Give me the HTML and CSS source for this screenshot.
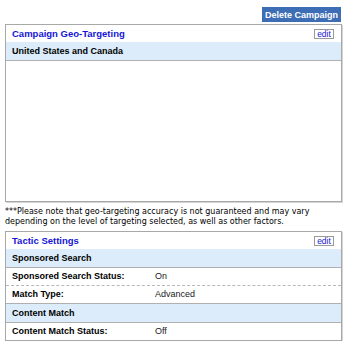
FILE: index.html
```html
<!DOCTYPE html>
<html lang="en">
<head>
    <meta charset="UTF-8">
    <title>Campaign Settings</title>
    <link rel="stylesheet" href="styles.css">
</head>
<body>

<div class="page">
    <div class="actions">
        <button class="delete-btn">Delete Campaign</button>
    </div>

    <div class="panel">
        <div class="panel-head">
            <span class="panel-title">Campaign Geo-Targeting</span>
            <span class="edit-btn">edit</span>
        </div>
        <div class="sub-row">United States and Canada</div>
        <div class="geo-body"></div>
    </div>

    <p class="note">***Please note that geo-targeting accuracy is not guaranteed and may vary depending on the level of targeting selected, as well as other factors.</p>

    <div class="panel">
        <div class="panel-head">
            <span class="panel-title">Tactic Settings</span>
            <span class="edit-btn">edit</span>
        </div>
        <div class="sub-row">Sponsored Search</div>
        <div class="row dashed">
            <span class="row-label">Sponsored Search Status:</span>
            <span class="row-value">On</span>
        </div>
        <div class="row">
            <span class="row-label">Match Type:</span>
            <span class="row-value">Advanced</span>
        </div>
        <div class="sub-row">Content Match</div>
        <div class="row">
            <span class="row-label">Content Match Status:</span>
            <span class="row-value">Off</span>
        </div>
    </div>
</div>

</body>
</html>
```

FILE: styles.css
```css
body {
    margin: 0;
    font-family: "Liberation Sans", Arial, sans-serif;
    font-size: 9px;
    color: #000;
    background: #fff;
}
.page {
    padding: 7px 4px 0 5px;
}
.actions {
    display: flex;
    justify-content: flex-end;
    margin-bottom: 2px;
}
.delete-btn {
    background: #3d6db5;
    color: #fff;
    border: none;
    font-family: "Liberation Sans", Arial, sans-serif;
    font-weight: bold;
    font-size: 9px;
    height: 15px;
    padding: 0 3px;
    margin-right: 1px;
}
.panel {
    border: 1px solid #a8a8a8;
    box-shadow: 1px 1px 0 #d4d4d4;
}
.panel-head {
    display: flex;
    justify-content: space-between;
    align-items: center;
    height: 17px;
    padding: 0 7px 0 6px;
}
.panel-title {
    color: #1515d8;
    font-weight: bold;
    font-size: 9.5px;
}
.edit-btn {
    box-sizing: border-box;
    width: 20px;
    height: 10px;
    border: 1px solid #9a9a9a;
    color: #1515d8;
    font-size: 8.5px;
    line-height: 8px;
    text-align: center;
}
.sub-row {
    background: #dcecfb;
    border-bottom: 1px solid #b0b0b0;
    font-weight: bold;
    height: 18px;
    line-height: 18px;
    padding-left: 6px;
}
.geo-body {
    height: 140px;
}
.note {
    font-family: "DejaVu Sans", Verdana, sans-serif;
    font-size: 8px;
    line-height: 10px;
    margin: 5px 0 4px 0;
}
.row {
    display: flex;
    height: 17px;
    line-height: 17px;
    padding-left: 6px;
    border-bottom: 1px solid #b0b0b0;
}
.row.dashed {
    border-bottom: 1px dashed #b8b8b8;
}
.row:last-child {
    border-bottom: none;
}
.row-label {
    width: 143px;
    font-weight: bold;
}
.row-value {
    color: #222;
}
```
